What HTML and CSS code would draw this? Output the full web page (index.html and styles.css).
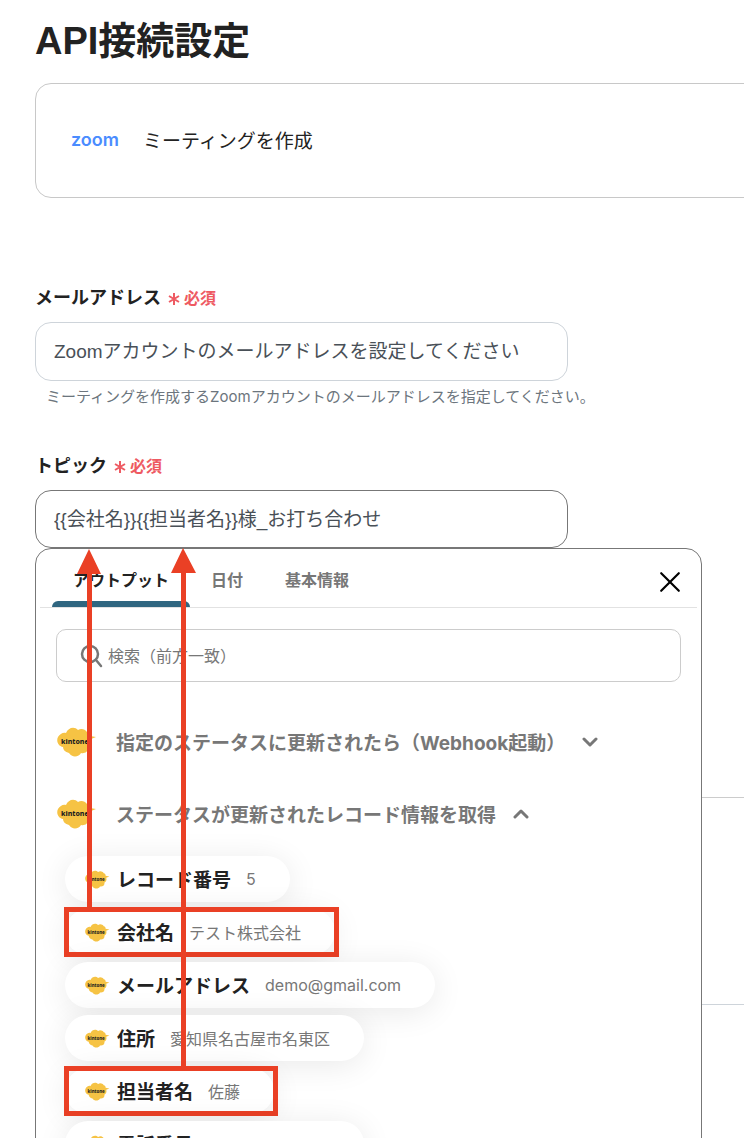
FILE: index.html
```html
<!DOCTYPE html>
<html lang="ja">
<head>
    <meta charset="UTF-8">
    <meta name="viewport" content="width=device-width, initial-scale=1.0">
    <title>API接続設定</title>
    <link rel="stylesheet" href="styles.css">
</head>
<body>
    <!-- shared logo shape -->
    <svg class="sprite" aria-hidden="true">
        <symbol id="kintone" viewBox="0 0 40 30">
            <path fill="#f6c344" d="M9 6C11 1 17-1 21 3c3-2 7-1 9 2 2 0 3 2 3 4l6 1-5 2c1 4 0 7-3 8 1 4-3 7-7 6-2 4-9 5-12 0C8 25 6 23 6 20 1 19-1 14 1 10c2-3 5-5 8-4z"/>
            <text x="4" y="17" font-family="Noto Sans, sans-serif" font-size="7" font-weight="800" fill="#1f1f1f">kintone</text>
        </symbol>
    </svg>

    <main class="page">
        <h1 class="page-title">API接続設定</h1>

        <div class="action-card">
            <span class="zoom-logo">zoom</span>
            <span class="action-name">ミーティングを作成</span>
        </div>

        <form class="settings-form">
            <div class="form-group">
                <div class="form-label">
                    <label for="email">メールアドレス</label>
                    <span class="required"><svg viewBox="0 0 12 12"><path d="M6 0v12M1 3l10 6M11 3L1 9"/></svg>必須</span>
                </div>
                <input class="form-input" type="text" id="email" value="Zoomアカウントのメールアドレスを設定してください">
                <p class="help-text">ミーティングを作成するZoomアカウントのメールアドレスを指定してください。</p>
            </div>

            <div class="form-group">
                <div class="form-label">
                    <label for="topic">トピック</label>
                    <span class="required"><svg viewBox="0 0 12 12"><path d="M6 0v12M1 3l10 6M11 3L1 9"/></svg>必須</span>
                </div>
                <div class="picker">
                    <input class="form-input active" type="text" id="topic" value="{{会社名}}{{担当者名}}様_お打ち合わせ">

                    <div class="picker-panel">
                        <div class="tabs">
                            <button type="button" class="tab selected">アウトプット</button>
                            <button type="button" class="tab">日付</button>
                            <button type="button" class="tab">基本情報</button>
                            <button type="button" class="close-btn" aria-label="閉じる">
                                <svg viewBox="0 0 20 20"><path d="M2 2l16 16M18 2L2 18"/></svg>
                            </button>
                        </div>

                        <div class="search-box">
                            <svg viewBox="0 0 22 22"><circle cx="10" cy="9" r="8"/><path d="M16 15l5 6"/></svg>
                            <input type="text" aria-label="検索" placeholder="検索（前方一致）">
                        </div>

                        <button type="button" class="group">
                            <svg class="group-logo"><use href="#kintone"/></svg>
                            <span class="group-title">指定のステータスに更新されたら（Webhook起動）</span>
                            <svg class="chevron" viewBox="0 0 16 10"><path d="M2 2l6 6 6-6"/></svg>
                        </button>
                        <button type="button" class="group">
                            <svg class="group-logo"><use href="#kintone"/></svg>
                            <span class="group-title">ステータスが更新されたレコード情報を取得</span>
                            <svg class="chevron" viewBox="0 0 16 10"><path d="M2 8l6-6 6 6"/></svg>
                        </button>

                        <div class="tags">
                            <button type="button" class="tag"><svg class="tag-logo"><use href="#kintone"/></svg><span class="tag-name">レコード番号</span><span class="tag-value">5</span></button>
                            <button type="button" class="tag marked"><svg class="tag-logo"><use href="#kintone"/></svg><span class="tag-name">会社名</span><span class="tag-value">テスト株式会社</span></button>
                            <button type="button" class="tag"><svg class="tag-logo"><use href="#kintone"/></svg><span class="tag-name">メールアドレス</span><span class="tag-value">demo@gmail.com</span></button>
                            <button type="button" class="tag"><svg class="tag-logo"><use href="#kintone"/></svg><span class="tag-name">住所</span><span class="tag-value">愛知県名古屋市名東区</span></button>
                            <button type="button" class="tag marked"><svg class="tag-logo"><use href="#kintone"/></svg><span class="tag-name">担当者名</span><span class="tag-value">佐藤</span></button>
                            <button type="button" class="tag"><svg class="tag-logo"><use href="#kintone"/></svg><span class="tag-name">電話番号</span><span class="tag-value">090-9987-9987</span></button>
                        </div>

                        <!-- arrows from the marked tags up to the input -->
                        <svg class="arrows" viewBox="0 0 180 520" aria-hidden="true">
                            <path d="M51 24h5v336h-5zM41 25L53 0l12 25zM145 24h5v494h-5zM135 24L147-1l13 25z"/>
                        </svg>
                    </div>
                </div>
            </div>
        </form>

        <div class="next-section"></div>
    </main>
</body>
</html>
```

FILE: styles.css
```css
* {
    margin: 0;
    padding: 0;
    box-sizing: border-box;
}

body {
    font-family: Inter, "Noto Sans CJK JP", sans-serif;
    color: #222;
    background: #fff;
}

button,
input {
    font-family: inherit;
}

button {
    background: none;
    border: none;
    cursor: pointer;
}

svg {
    flex-shrink: 0;
}

.sprite {
    display: none;
}

.page {
    height: 100vh;
    padding: 13px 0 0 35px;
    overflow: hidden;
}

.page-title {
    font-family: "Liberation Sans", "Noto Sans CJK JP", sans-serif;
    font-size: 38px;
    line-height: 56px;
    font-weight: bold;
}

.action-card {
    display: flex;
    align-items: center;
    gap: 24px;
    height: 115px;
    margin: 14px -40px 0 0;
    padding: 0 35px 2px;
    border: 1px solid #c8c8c8;
    border-radius: 16px;
}

.zoom-logo {
    color: #4a8cff;
    font-size: 18px;
    font-weight: 600;
}

.action-name {
    font-size: 19px;
}

.settings-form {
    margin-top: 84px;
}

.form-group {
    margin-bottom: 41px;
}

.form-label {
    display: flex;
    align-items: center;
    gap: 7px;
    height: 28px;
    margin-bottom: 12px;
    font-size: 18px;
    font-weight: bold;
}

.required {
    display: flex;
    align-items: center;
    gap: 4px;
    padding-top: 2px;
    color: #ee5a62;
    font-size: 16px;
}

.required svg {
    width: 12px;
    height: 12px;
    margin-top: 4px;
    stroke: currentColor;
    stroke-width: 2;
}

.form-input {
    display: block;
    width: 100%;
    max-width: 533px;
    height: 59px;
    padding: 0 18px 4px;
    border: 1px solid #ced4da;
    border-radius: 16px;
    background: #fff;
    color: #495057;
    font-family: "Liberation Sans", "Noto Sans CJK JP", sans-serif;
    font-size: 19px;
    outline: none;
}

.form-input.active {
    height: 58px;
    border-color: #777;
}

.help-text {
    padding-left: 11px;
    color: #6c757d;
    font-size: 15px;
    line-height: 24px;
    margin-top: 4px;
}

.picker {
    position: relative;
}

/* dropdown under the input */
.picker-panel {
    position: absolute;
    top: 100%;
    left: 0;
    z-index: 10;
    width: calc(100% - 42px);
    padding: 0 4px;
    border: 1px solid #777;
    border-radius: 16px;
    background: #fff;
}

.tabs {
    display: flex;
    align-items: stretch;
    height: 59px;
    padding: 0 16px 0 12px;
    border-bottom: 1px solid #e2e2e2;
}

.tab {
    padding: 2px 21px 0;
    color: #777;
    font-size: 16px;
    font-weight: bold;
}

.tab.selected {
    position: relative;
    color: #222;
}

.tab.selected::after {
    content: "";
    position: absolute;
    left: 0;
    right: 0;
    bottom: 0;
    height: 6px;
    border-radius: 6px 6px 0 0;
    background: #2f6680;
}

.close-btn {
    display: flex;
    align-items: center;
    margin-left: auto;
    padding-top: 8px;
}

.close-btn svg {
    width: 22px;
    height: 22px;
    stroke: #000;
    stroke-width: 2;
    stroke-linecap: round;
}

.search-box {
    display: flex;
    align-items: center;
    gap: 6px;
    height: 53px;
    margin: 21px 16px 24px;
    padding: 0 23px;
    border: 1px solid #ccc;
    border-radius: 10px;
}

.search-box svg {
    width: 22px;
    height: 22px;
    fill: none;
    stroke: #777;
    stroke-width: 2.5;
    stroke-linecap: round;
    overflow: visible;
}

.search-box input {
    flex: 1;
    border: none;
    outline: none;
    font-size: 16px;
}

.search-box input::placeholder {
    color: #777;
}

.group {
    display: flex;
    align-items: center;
    height: 72px;
    padding-left: 17px;
    color: #777;
}

.group-logo {
    width: 40px;
    height: 30px;
}

.group-title {
    margin: 0 17px 0 19px;
    padding-bottom: 2px;
    font-size: 19px;
    font-weight: bold;
}

.chevron {
    width: 16px;
    height: 10px;
    fill: none;
    stroke: #777;
    stroke-width: 3;
    stroke-linecap: round;
    stroke-linejoin: round;
}

.tags {
    display: flex;
    flex-direction: column;
    align-items: flex-start;
    gap: 7px;
    padding: 6px 25px 24px;
}

.tag {
    position: relative;
    display: flex;
    align-items: center;
    height: 46px;
    padding: 0 34px 0 20px;
    border-radius: 23px;
    background: #fff;
    box-shadow: 0 4px 32px rgba(0, 0, 0, 0.09);
}

.tag-logo {
    width: 25px;
    height: 19px;
}

.tag-name {
    margin: 0 15px 0 7px;
    padding-bottom: 2px;
    color: #222;
    font-size: 19px;
    font-weight: bold;
}

.tag-value {
    padding-bottom: 1px;
    color: #777;
    font-size: 16px;
}

.tag.marked::after {
    content: "";
    position: absolute;
    inset: -2px -4px -2px -1px;
    border: 5px solid #ea4025;
}

.arrows {
    position: absolute;
    top: 0;
    left: 0;
    width: 180px;
    height: 520px;
    overflow: visible;
    fill: #ea4025;
    pointer-events: none;
}

.next-section {
    height: 208px;
    margin-top: 249px;
    border-top: 1px solid #ccc;
    border-bottom: 1px solid #ced4da;
}
```
